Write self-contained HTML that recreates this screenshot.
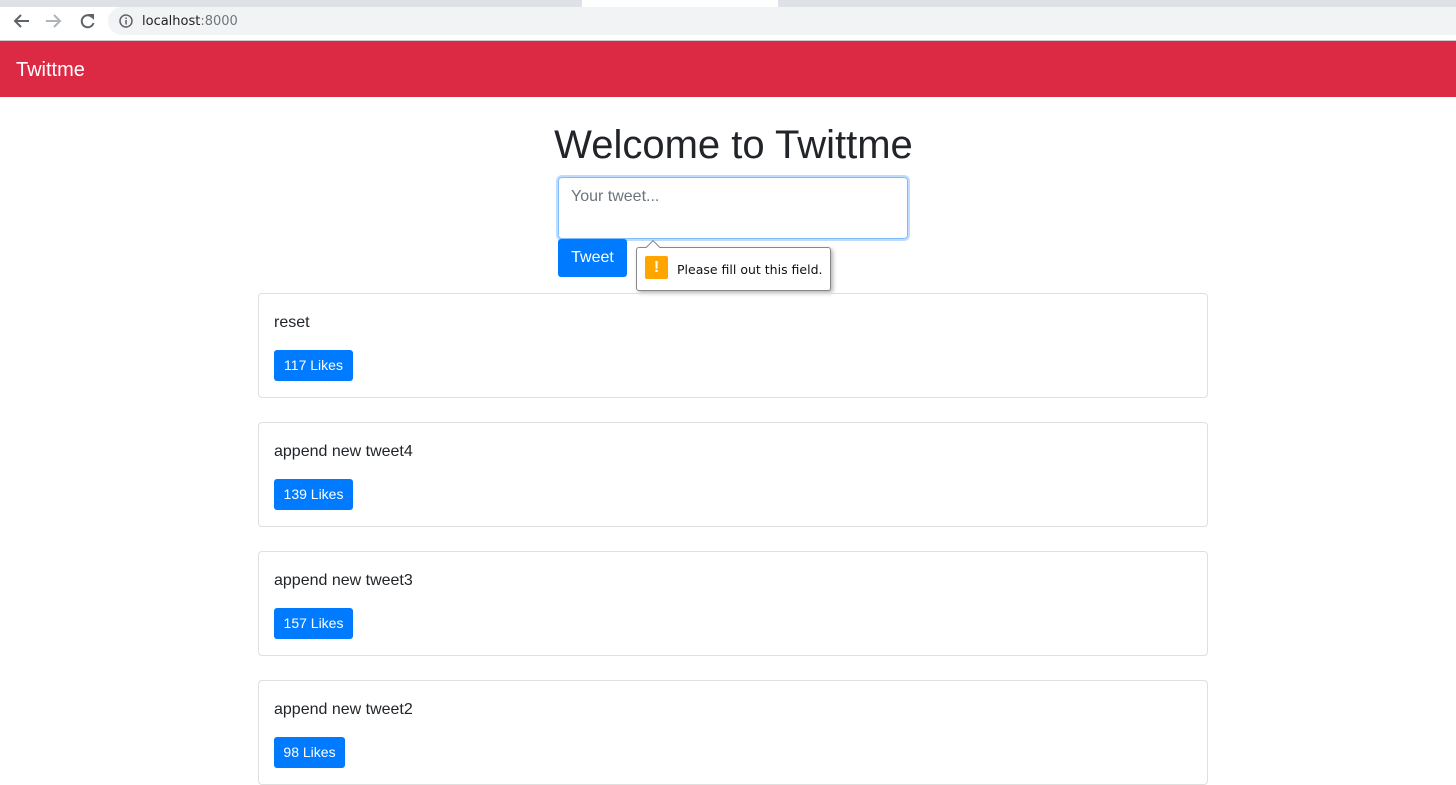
<!DOCTYPE html>
<html><head><style>
*{box-sizing:border-box}
body{margin:0;width:1456px;height:780px;overflow:hidden;font-family:"Liberation Sans",sans-serif;background:#fff;position:relative}
.abs{position:absolute}
.chrome{top:0;left:0;width:1456px;height:41px;background:#fff;border-bottom:1px solid #ccc}
.tabs{top:0;left:0;width:1456px;height:7px;background:#dee1e6}
.tab{top:0;left:582px;width:196px;height:7px;background:#fff}
.url{top:7px;left:108px;width:1360px;height:28px;background:#f1f3f4;border-radius:14px}
.nav{top:41px;left:0;width:1456px;height:56px;background:#dc2a45;color:#fff;font-size:20px;padding:18px 16px 0}
h1{position:absolute;top:123px;left:0;width:1456px;padding-left:11px;text-align:center;margin:0;font-weight:400;font-size:40px;color:#212529}
.ta{top:177px;left:558px;width:350px;height:62px;border:1px solid #80bdff;border-radius:4px;box-shadow:0 0 0 2px #bfdcff;color:#6c757d;font-size:16px;padding:10px 12px}
.btn{background:#007bff;color:#fff;border-radius:3px;text-align:center}
.card{left:258px;width:950px;height:105px;border:1px solid #dfdfdf;border-radius:4px}
.card .t{position:absolute;left:15px;top:20px;font-size:16px;color:#212529}
.card .b{position:absolute;left:15px;top:56px;height:31px;font-size:14px;line-height:31px;padding:0 9px;width:79px}
</style></head><body>
<div class="abs chrome"></div><div class="abs tabs"></div><div class="abs tab"></div>
<div class="abs url"></div>
<svg class="abs" style="left:12px;top:11px" width="90" height="20" viewBox="0 0 90 20">
<path d="M17 10H4M9 4l-6 6 6 6" stroke="#5f6368" stroke-width="2" fill="none"/>
<path d="M34 10h13M42 4l6 6-6 6" stroke="#b0b3b7" stroke-width="2" fill="none"/>
<path d="M80 6a6 6 0 1 0 1.5 6" stroke="#5f6368" stroke-width="2" fill="none"/><path d="M76 3h6v6z" fill="#5f6368"/>
</svg>
<svg class="abs" style="left:118px;top:13px" width="16" height="16"><circle cx="8" cy="8" r="6" stroke="#5f6368" stroke-width="1.5" fill="none"/><rect x="7.3" y="7" width="1.5" height="4.5" fill="#5f6368"/><rect x="7.3" y="4.5" width="1.5" height="1.5" fill="#5f6368"/></svg>
<div class="abs" style="left:142px;top:14px;color:#202124;font-family:'DejaVu Sans',sans-serif;font-size:13px">localhost<span style="color:#70757a">:8000</span></div>
<div class="abs nav">Twittme</div>
<h1>Welcome to Twittme</h1>
<div class="abs ta">Your tweet...</div>
<div class="abs btn" style="left:558px;top:239px;width:69px;height:38px;font-size:16px;line-height:38px">Tweet</div>
<div class="abs" style="left:636px;top:247px;width:195px;height:44px;background:#fff;border:1px solid #888;border-radius:3px;box-shadow:2px 2px 4px rgba(0,0,0,.3)"></div>
<div class="abs" style="left:648px;top:242px;width:10px;height:10px;background:#fff;border-left:1px solid #888;border-top:1px solid #888;transform:rotate(45deg)"></div>
<div class="abs" style="left:645px;top:256px;width:23px;height:23px;background:#ffa500;border-radius:2px;color:#fff;font-weight:bold;text-align:center;font-size:16px;line-height:23px">!</div>
<div class="abs" style="left:677px;top:262px;font-family:'DejaVu Sans',sans-serif;font-size:12.5px;color:#111">Please fill out this field.</div>
<div class="abs card" style="top:293px"><div class="t">reset</div><div class="b btn">117 Likes</div></div>
<div class="abs card" style="top:422px"><div class="t">append new tweet4</div><div class="b btn">139 Likes</div></div>
<div class="abs card" style="top:551px"><div class="t">append new tweet3</div><div class="b btn">157 Likes</div></div>
<div class="abs card" style="top:680px"><div class="t">append new tweet2</div><div class="b btn" style="width:71px">98 Likes</div></div>
</body></html>
